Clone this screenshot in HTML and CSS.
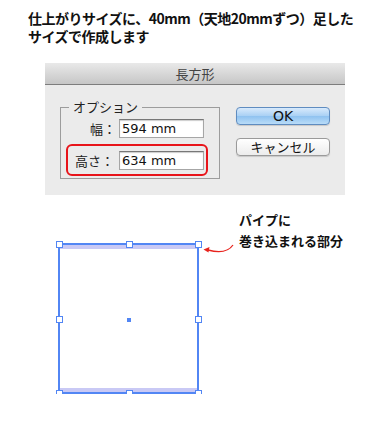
FILE: index.html
```html
<!DOCTYPE html>
<html lang="ja">
<head>
  <meta charset="UTF-8">
  <meta name="viewport" content="width=device-width, initial-scale=1.0">
  <title>長方形</title>
  <link rel="stylesheet" href="styles.css">
</head>
<body>
  <div class="lead">
    <p>仕上がりサイズに、40mm（天地20mmずつ）足した</p>
    <p>サイズで作成します</p>
  </div>

  <div class="dialog">
    <div class="dialog-title">長方形</div>
    <div class="dialog-body">
      <fieldset class="options">
        <legend>オプション</legend>
        <div class="field">
          <label class="field-label">幅：</label>
          <div class="field-input">594 mm</div>
        </div>
        <div class="field field-marked">
          <label class="field-label">高さ：</label>
          <div class="field-input">634 mm</div>
        </div>
      </fieldset>
      <div class="buttons">
        <button class="btn btn-default">OK</button>
        <button class="btn">キャンセル</button>
      </div>
    </div>
  </div>

  <div class="artboard">
    <div class="shape">
      <div class="band band-top"></div>
      <div class="band band-bottom"></div>
      <span class="handle h-tl"></span>
      <span class="handle h-tc"></span>
      <span class="handle h-tr"></span>
      <span class="handle h-ml"></span>
      <span class="handle h-mr"></span>
      <span class="handle h-bl"></span>
      <span class="handle h-bc"></span>
      <span class="handle h-br"></span>
      <span class="center-dot"></span>
    </div>
    <div class="note">
      <p>パイプに</p>
      <p>巻き込まれる部分</p>
      <svg class="note-arrow" width="40" height="30" viewBox="0 0 40 30">
        <path d="M34 6 Q27 16 9 11" fill="none" stroke="#e8231d" stroke-width="1.3"/>
        <path d="M4.5 10.5 L10.5 8 L9.5 13.5 Z" fill="#e8231d"/>
      </svg>
    </div>
  </div>
</body>
</html>
```

FILE: styles.css
```css
* {
  margin: 0;
  padding: 0;
  box-sizing: border-box;
}

body {
  font-family: "Noto Sans CJK JP", "DejaVu Sans", sans-serif;
  background: #fff;
  color: #111;
  width: 380px;
}

.lead {
  padding: 9px 0 0 28px;
  font-size: 14px;
  line-height: 18px;
  font-weight: 700;
  letter-spacing: -0.5px;
}

.lead p {
  height: 18px;
  white-space: nowrap;
}

/* dialog */
.dialog {
  margin: 18px 0 0 45px;
  width: 300px;
  background: #ebebeb;
}

.dialog-title {
  height: 22px;
  line-height: 21px;
  text-align: center;
  font-size: 13px;
  color: #444;
  background: linear-gradient(#e9e9e9, #c6c6c6);
  border-bottom: 1px solid #7d7d7d;
}

.dialog-body {
  display: flex;
  padding: 14px 0 16px 15px;
}

.options {
  width: 160px;
  border: 1px solid #9c9c9c;
  padding: 0 0 2px 0;
}

.options legend {
  font-size: 13px;
  line-height: 16px;
  padding: 0 4px;
  margin-left: 8px;
  color: #222;
}

.field {
  display: flex;
  align-items: center;
  margin-top: 4px;
}

.field-label {
  width: 55px;
  text-align: right;
  font-size: 13px;
  color: #222;
  margin-right: 3px;
}

.field-input {
  width: 85px;
  height: 19px;
  background: #fff;
  border: 1px solid #a6a6a6;
  border-top-color: #777;
  box-shadow: inset 0 1px 1px rgba(0, 0, 0, 0.2);
  font-family: "DejaVu Sans", sans-serif;
  font-size: 13px;
  line-height: 17px;
  padding-left: 2px;
  color: #111;
}

.field-marked {
  margin: 6px 0 0 5px;
  width: 142px;
  height: 32px;
  border: 2px solid #e8141a;
  border-radius: 6px;
  padding-left: 7px;
}

.field-marked .field-label {
  width: auto;
  text-align: left;
  margin-right: 5px;
}

.buttons {
  display: flex;
  flex-direction: column;
  gap: 13px;
  margin: 8px 0 0 16px;
  width: 94px;
}

.btn {
  height: 18px;
  font-family: "Noto Sans CJK JP", sans-serif;
  font-size: 13px;
  line-height: 16px;
  color: #111;
  background: linear-gradient(#ffffff, #ececec);
  border: 1px solid #9a9a9a;
  border-radius: 4px;
  box-shadow: 0 1px 1px rgba(0, 0, 0, 0.15);
}

.btn-default {
  font-family: "DejaVu Sans", sans-serif;
  font-size: 14px;
  background: linear-gradient(#d8eafc, #a9d0f4 50%, #8fc2f0 51%, #b9dcf8);
  border-color: #5f8cc0;
}

/* artboard */
.artboard {
  display: flex;
  align-items: flex-start;
  margin-top: 14px;
  padding-left: 58px;
}

.shape {
  position: relative;
  margin-top: 34px;
  width: 141px;
  height: 151px;
  border: 2px solid #5286f4;
  background: #fff;
}

.band {
  height: 4px;
  background: #c9c9f5;
}

.band-bottom {
  margin-top: 139px;
}

.handle {
  position: absolute;
  width: 7px;
  height: 7px;
  background: #fff;
  border: 1px solid #5286f4;
}

.h-tl, .h-tc, .h-tr { top: -4px; }
.h-bl, .h-bc, .h-br { bottom: -5px; }
.h-ml, .h-mr { top: calc(50% - 3px); }
.h-tl, .h-ml, .h-bl { left: -4px; }
.h-tr, .h-mr, .h-br { right: -5px; }
.h-tc, .h-bc { left: calc(50% - 3px); }

.center-dot {
  position: absolute;
  left: calc(50% - 2px);
  top: calc(50% - 1px);
  width: 4px;
  height: 4px;
  background: #5286f4;
}

.note {
  position: relative;
  margin-left: 40px;
  font-size: 13px;
  line-height: 21px;
  font-weight: 700;
  color: #111;
}

.note p {
  height: 21px;
  white-space: nowrap;
}

.note-arrow {
  position: absolute;
  left: -40px;
  top: 30px;
}
```
